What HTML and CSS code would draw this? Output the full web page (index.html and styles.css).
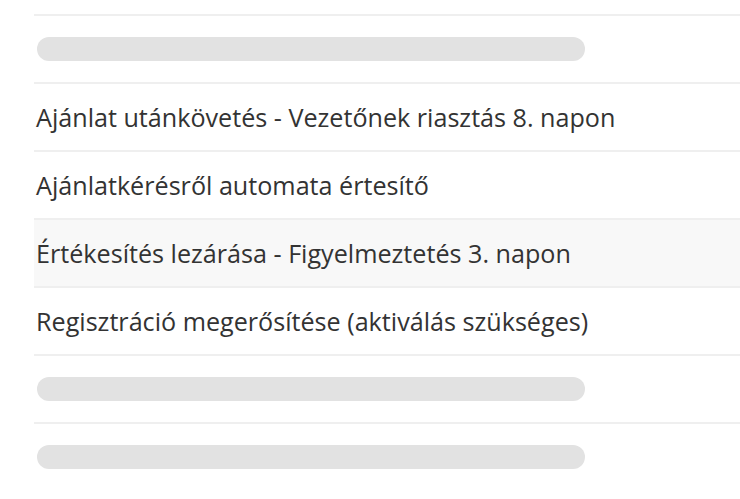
FILE: index.html
```html
<!DOCTYPE html>
<html lang="hu">
<head>
<meta charset="utf-8">
<title>Sablonok</title>
<link rel="stylesheet" href="styles.css">
</head>
<body>
<ul class="list">
  <li class="row"><span class="skeleton"></span></li>
  <li class="row"><span class="skeleton"></span></li>
  <li class="row"><span class="label">Ajánlat utánkövetés - Vezetőnek riasztás 8. napon</span></li>
  <li class="row"><span class="label">Ajánlatkérésről automata értesítő</span></li>
  <li class="row row-hover"><span class="label">Értékesítés lezárása - Figyelmeztetés 3. napon</span></li>
  <li class="row"><span class="label">Regisztráció megerősítése (aktiválás szükséges)</span></li>
  <li class="row"><span class="skeleton"></span></li>
  <li class="row"><span class="skeleton"></span></li>
</ul>
</body>
</html>
```
FILE: styles.css
```css
html, body {
  margin: 0;
  padding: 0;
  background: #ffffff;
  overflow: hidden;
}
body {
  font-family: "Open Sans", "Noto Sans", sans-serif;
  color: #333333;
}
.list {
  list-style: none;
  margin: -52px 0 0 34px;
  padding: 0;
}
.row {
  height: 66px;
  border-bottom: 2px solid #efefef;
  display: flex;
  align-items: center;
  padding-left: 2px;
}
.row:last-child {
  border-bottom: none;
}
.row-hover {
  background: #f8f8f8;
}
.label {
  font-size: 25.15px;
  line-height: 34px;
  white-space: nowrap;
}
.skeleton {
  display: block;
  width: 548px;
  height: 24px;
  border-radius: 12px;
  background: #e2e2e2;
  margin-left: 1px;
}
```
